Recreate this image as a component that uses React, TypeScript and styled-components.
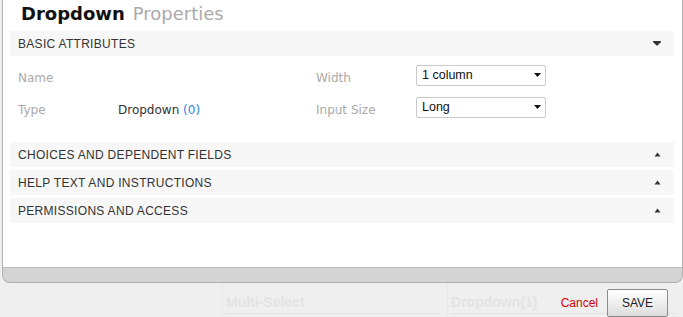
import React from 'react';
import styled, { createGlobalStyle } from 'styled-components';

const GlobalStyle = createGlobalStyle`
  html, body {
    margin: 0;
    padding: 0;
    background: #efefef;
  }
  body {
    font-family: "DejaVu Sans", Verdana, sans-serif;
  }
`;

const Page = styled.div`
  position: relative;
  width: 683px;
  height: 317px;
  overflow: hidden;
  background: #efefef;
`;

const Modal = styled.div`
  margin-left: 2px;
  width: 681px;
  box-sizing: border-box;
  border: 1px solid #b1b1b1;
  border-top: none;
  border-radius: 0 0 8px 8px;
  background: #d4d4d4;
  overflow: hidden;
`;

const ModalBody = styled.div`
  height: 268px;
  box-sizing: border-box;
  background: #fff;
  border-bottom: 1px solid #bdbdbd;
`;

const ModalFooter = styled.div`
  height: 14px;
`;

const Header = styled.h1`
  display: flex;
  align-items: baseline;
  margin: 0 0 6px;
  padding: 3px 0 0 18px;
  height: 22px;
  font-size: 18px;
  line-height: 22px;
  font-weight: normal;
`;

const TitleMain = styled.span`
  font-weight: bold;
  color: #111;
`;

const TitleSub = styled.span`
  margin-left: 8px;
  color: #aaa;
`;

const Section = styled.section`
  margin: 0 8px 3px 7px;
`;

const SectionHeader = styled.div`
  display: flex;
  align-items: center;
  justify-content: space-between;
  height: 25px;
  padding: 0 13px 0 8px;
  background: #f7f7f7;
  font-family: "Liberation Sans", Arial, sans-serif;
  font-size: 12px;
  letter-spacing: 0.3px;
  color: #333;
  text-transform: uppercase;
`;

const AttrGrid = styled.div`
  display: grid;
  grid-template-columns: 100px 198px 100px 130px;
  grid-template-rows: 21px 21px;
  row-gap: 11px;
  padding: 8px 0 22px 8px;
`;

const Label = styled.div`
  padding-top: 4px;
  font-size: 12px;
  line-height: 20px;
  color: #aaa;
`;

const Value = styled.div`
  padding-top: 4px;
  font-size: 12px;
  line-height: 20px;
  color: #333;
`;

const Count = styled.span`
  color: #2b84d6;
`;

const SelectWrap = styled.div`
  position: relative;
  width: 130px;
  height: 21px;
`;

const Select = styled.select`
  appearance: none;
  width: 100%;
  height: 100%;
  box-sizing: border-box;
  margin: 0;
  padding: 0 0 0 5px;
  border: 1px solid #c9c9c9;
  border-radius: 2px;
  background: #fff;
  font-family: "Liberation Sans", Arial, sans-serif;
  font-size: 12.5px;
  color: #111;
  outline: none;
`;

const SelectArrow = styled.svg`
  position: absolute;
  right: 5px;
  top: 9px;
  pointer-events: none;
`;

const Backdrop = styled.div`
  display: flex;
  padding: 1px 0 0 222px;
`;

const GhostCell = styled.div<{ $width: number }>`
  width: ${({ $width }) => $width}px;
  height: 32px;
  box-sizing: border-box;
  border-left: 1px dashed #e4e4e4;
  padding: 10px 0 0 3px;
  margin-right: 7px;
  font-family: "Liberation Sans", Arial, sans-serif;
  font-size: 14px;
  font-weight: bold;
  line-height: 16px;
  color: #e3e3e3;
`;

const GhostInput = styled.div`
  margin-top: 3px;
  border-top: 1px solid #e2e2e2;
`;

const Actions = styled.div`
  position: absolute;
  right: 15px;
  top: 289px;
  display: flex;
  align-items: center;
  gap: 9px;
`;

const CancelLink = styled.a`
  font-family: "Liberation Sans", Arial, sans-serif;
  font-size: 12px;
  color: #d80000;
  text-decoration: none;
  cursor: pointer;
`;

const SaveButton = styled.button`
  width: 61px;
  height: 28px;
  border: 1px solid #8c8c8c;
  border-radius: 2px;
  background: linear-gradient(#ffffff, #f1f1f1 45%, #dcdcdc);
  font-family: "Liberation Sans", Arial, sans-serif;
  font-size: 12px;
  color: #222;
  cursor: pointer;
`;

const Caret: React.FC<{ open?: boolean }> = ({ open }) =>
  open ? (
    <svg width="8" height="5" viewBox="0 0 8 5">
      <polygon points="0,0 8,0 8,1 4.5,4.5 3.5,4.5 0,1" fill="#333" />
    </svg>
  ) : (
    <svg width="7" height="5" viewBox="0 0 7 5">
      <polygon points="0.5,4.5 6.5,4.5 3.5,0.5" fill="#333" />
    </svg>
  );

const Dropdown: React.FC<{ value: string; options: string[] }> = ({ value, options }) => (
  <SelectWrap>
    <Select defaultValue={value}>
      {options.map((o) => (
        <option key={o}>{o}</option>
      ))}
    </Select>
    <SelectArrow width="7" height="4" viewBox="0 0 7 4">
      <polygon points="0,0 7,0 3.5,4" fill="#111" />
    </SelectArrow>
  </SelectWrap>
);

const collapsed = ['Choices and dependent fields', 'Help text and instructions', 'Permissions and access'];

export default function App() {
  return (
    <Page>
      <GlobalStyle />
      <Modal>
        <ModalBody>
          <Header>
            <TitleMain>Dropdown</TitleMain>
            <TitleSub>Properties</TitleSub>
          </Header>

          <Section>
            <SectionHeader>
              Basic attributes
              <Caret open />
            </SectionHeader>
            <AttrGrid>
              <Label>Name</Label>
              <Value />
              <Label>Width</Label>
              <Dropdown value="1 column" options={['1 column', '2 columns', '3 columns']} />
              <Label>Type</Label>
              <Value>
                Dropdown <Count>(0)</Count>
              </Value>
              <Label>Input Size</Label>
              <Dropdown value="Long" options={['Short', 'Medium', 'Long']} />
            </AttrGrid>
          </Section>

          {collapsed.map((title) => (
            <Section key={title}>
              <SectionHeader>
                {title}
                <Caret />
              </SectionHeader>
            </Section>
          ))}
        </ModalBody>
        <ModalFooter />
      </Modal>

      <Backdrop>
        <GhostCell $width={219}>
          Multi-Select
          <GhostInput />
        </GhostCell>
        <GhostCell $width={230}>
          Dropdown(1)
          <GhostInput />
        </GhostCell>
      </Backdrop>

      <Actions>
        <CancelLink>Cancel</CancelLink>
        <SaveButton>SAVE</SaveButton>
      </Actions>
    </Page>
  );
}
